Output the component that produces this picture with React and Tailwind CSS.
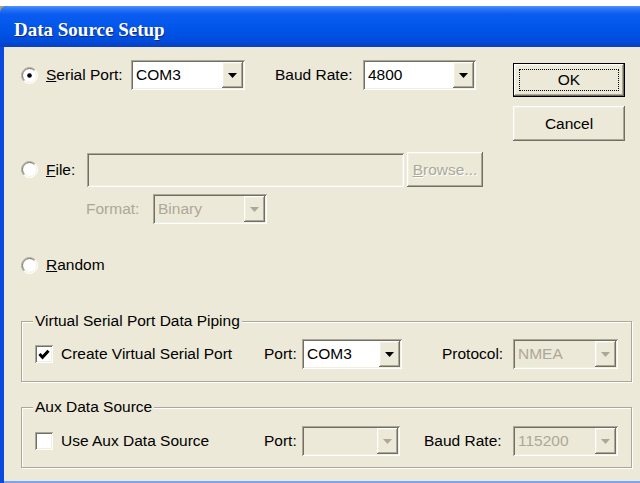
import React from "react";

// classic 3D bevels for the dialog controls
const raised =
  "shadow-[inset_-1px_-1px_0_#716f64,inset_1px_1px_0_#ffffff,inset_-2px_-2px_0_#aca899,inset_2px_2px_0_#f1efe2]";
const sunken =
  "shadow-[inset_1px_1px_0_#aca899,inset_-1px_-1px_0_#ffffff,inset_2px_2px_0_#716f64,inset_-2px_-2px_0_#f1efe2]";

const Arrow = ({ disabled }) => (
  <svg width="9" height="5" viewBox="0 0 9 5">
    <path d="M0 0h9L4.5 5z" fill={disabled ? "#aca899" : "#000000"} />
  </svg>
);

const Combo = ({ value, disabled, className }) => (
  <div
    className={`flex h-[30px] items-stretch p-[2px] ${sunken} ${disabled ? "bg-[#ece9d8] text-[#aca899]" : "bg-white text-black"} ${className}`}
  >
    <span className="flex flex-1 items-center pl-[3px] leading-none">{value}</span>
    <span className={`flex w-[21px] items-center justify-center bg-[#ece9d8] ${raised}`}>
      <Arrow disabled={disabled} />
    </span>
  </div>
);

const Radio = ({ checked }) => (
  <svg width="17" height="17" viewBox="0 0 17 17" className="shrink-0">
    <circle cx="8.5" cy="8.5" r="8" fill="#ffffff" />
    <path d="M2.84 14.16A8 8 0 0 1 14.16 2.84" fill="none" stroke="#aca899" strokeWidth="1" />
    <path d="M3.55 13.45A7 7 0 0 1 13.45 3.55" fill="none" stroke="#716f64" strokeWidth="1" />
    <path d="M14.16 2.84A8 8 0 0 1 2.84 14.16" fill="none" stroke="#ffffff" strokeWidth="1" />
    <path d="M13.45 3.55A7 7 0 0 1 3.55 13.45" fill="none" stroke="#f1efe2" strokeWidth="1" />
    {checked && <circle cx="8.5" cy="8.5" r="2.3" fill="#000000" />}
  </svg>
);

const Check = ({ checked }) => (
  <span className={`flex h-[18px] w-[18px] shrink-0 items-center justify-center bg-white ${sunken}`}>
    {checked && (
      <svg width="12" height="11" viewBox="0 0 12 11">
        <path d="M1.5 5l3 3.2 6-6.5" fill="none" stroke="#000000" strokeWidth="3" />
      </svg>
    )}
  </span>
);

const Button = ({ children, focused, disabled, className }) => (
  <div
    className={`flex items-center justify-center bg-[#ece9d8] ${focused ? "border border-black" : ""} ${raised} ${className}`}
  >
    {focused ? (
      <span className="flex h-[calc(100%-10px)] w-[calc(100%-10px)] items-center justify-center border border-dotted border-black">
        {children}
      </span>
    ) : (
      <span className={disabled ? "text-[#aca899] [text-shadow:1px_1px_0_#ffffff]" : ""}>{children}</span>
    )}
  </div>
);

const Group = ({ title, children }) => (
  <div className="relative h-[61px] w-[611px] border border-[#aca899] shadow-[inset_1px_1px_0_#ffffff,1px_1px_0_#ffffff]">
    <span className="absolute -top-[10px] left-[11px] bg-[#ece9d8] px-[2px] leading-[18px]">{title}</span>
    {children}
  </div>
);

export default function App() {
  return (
    <div className="h-[483px] w-[640px] overflow-hidden bg-white font-['Liberation_Sans',Arial,sans-serif] text-[15.5px] text-black">
      <div className="mt-[6px] h-[477px] w-[660px] bg-[#9a9a9a]">
        <div className="flex h-full flex-col overflow-hidden rounded-tl-[8px] bg-[#0b4ade]">
          {/* caption */}
          <div className="flex h-[41px] shrink-0 items-center bg-[linear-gradient(180deg,#4a93ff_0%,#2a74f6_8%,#0a5cf0_20%,#0056e8_55%,#004cdc_85%,#0a40bf_100%)] pl-[14px] pt-[7px]">
            <span className="font-['Liberation_Serif',serif] text-[19px] font-bold text-white [text-shadow:1px_1px_0_#0c2a8e]">
              Data Source Setup
            </span>
          </div>

          <div className="ml-[4px] flex flex-1 flex-col border-b-2 border-[#7da2ee] bg-[#ece9d8] pl-[17px]">
            <div className="flex">
              {/* source choices */}
              <div className="flex w-[492px] flex-col">
                <div className="mt-[13px] flex h-[30px] items-center">
                  <Radio checked />
                  <span className="ml-[8px] w-[85px]">
                    <u>S</u>erial Port:
                  </span>
                  <Combo value="COM3" className="w-[114px]" />
                  <span className="ml-[30px] w-[88px]">Baud Rate:</span>
                  <Combo value="4800" className="w-[113px]" />
                </div>

                <div className="mt-[62px] flex h-[35px] items-center">
                  <Radio />
                  <span className="ml-[8px] w-[41px]">
                    <u>F</u>ile:
                  </span>
                  <div className={`h-[34px] w-[317px] bg-[#ece9d8] ${sunken}`} />
                  <Button disabled className="ml-[3px] h-[35px] w-[76px]">
                    <u>B</u>rowse...
                  </Button>
                </div>

                <div className="ml-[65px] mt-[7px] flex h-[30px] items-center">
                  <span className="w-[67px] text-[#aca899]">Format:</span>
                  <Combo value="Binary" disabled className="w-[114px]" />
                </div>

                <div className="mt-[31px] flex h-[20px] items-center">
                  <Radio />
                  <span className="ml-[8px]">
                    <u>R</u>andom
                  </span>
                </div>
              </div>

              {/* dialog buttons */}
              <div className="mt-[16px] flex w-[112px] flex-col gap-[9px]">
                <Button focused className="h-[34px] w-[112px]">
                  OK
                </Button>
                <Button className="h-[35px] w-[112px]">Cancel</Button>
              </div>
            </div>

            <div className="mt-[46px]">
              <Group title="Virtual Serial Port Data Piping">
                <div className="mt-[17px] flex h-[30px] items-center pl-[13px]">
                  <div className="flex w-[229px] items-center">
                    <Check checked />
                    <span className="ml-[8px]">Create Virtual Serial Port</span>
                  </div>
                  <span className="w-[38px]">Port:</span>
                  <Combo value="COM3" className="w-[100px]" />
                  <span className="ml-[40px] w-[71px]">Protocol:</span>
                  <Combo value="NMEA" disabled className="w-[105px]" />
                </div>
              </Group>
            </div>

            <div className="mt-[25px]">
              <Group title="Aux Data Source">
                <div className="mt-[18px] flex h-[30px] items-center pl-[13px]">
                  <div className="flex w-[229px] items-center">
                    <Check />
                    <span className="ml-[8px]">Use Aux Data Source</span>
                  </div>
                  <span className="w-[38px]">Port:</span>
                  <Combo value="" disabled className="w-[98px]" />
                  <span className="ml-[24px] w-[89px]">Baud Rate:</span>
                  <Combo value="115200" disabled className="w-[105px]" />
                </div>
              </Group>
            </div>
          </div>
        </div>
      </div>
    </div>
  );
}
